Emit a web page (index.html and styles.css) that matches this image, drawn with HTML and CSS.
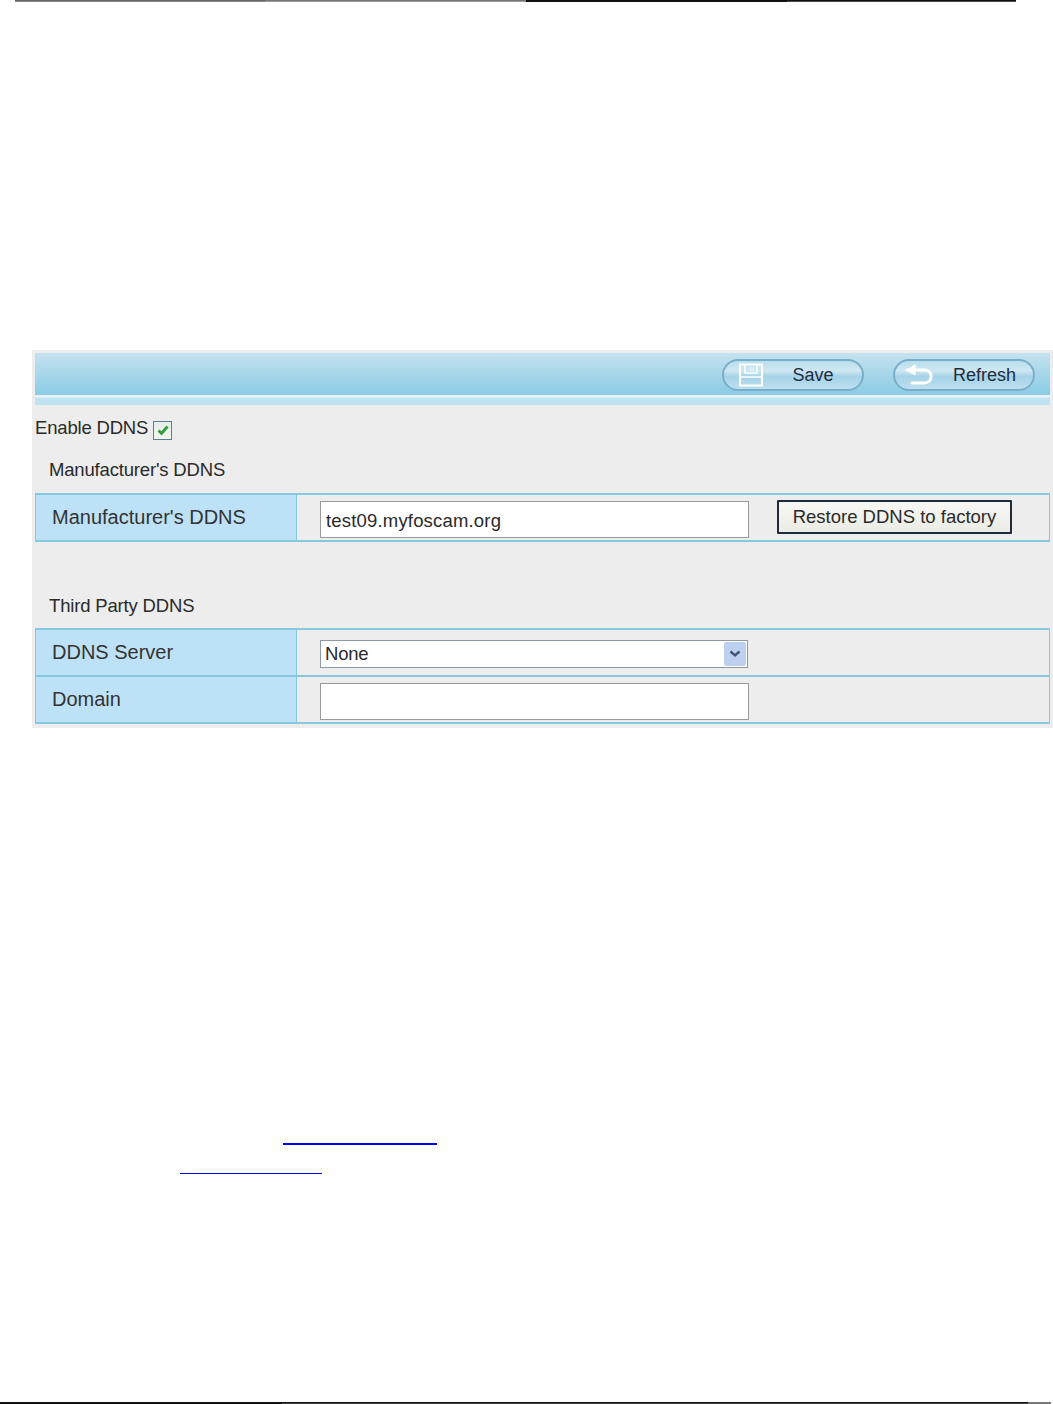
FILE: index.html
```html
<!DOCTYPE html>
<html lang="en">
<head>
<meta charset="utf-8">
<title>DDNS settings</title>
<link rel="stylesheet" href="styles.css">
</head>
<body>
<div class="page">
  <div class="rule rule-top"><i class="seg seg-a"></i><i class="seg seg-b"></i><i class="seg seg-c"></i><i class="seg seg-d"></i></div>
  <section class="panel">
    <div class="toolbar">
      <button class="pill" type="button">
        <svg class="pill-icon pill-icon-save" width="26" height="24" viewBox="0 0 26 24" aria-hidden="true"><path d="M2 1.500H24V22.500H2Z" fill="none" stroke="#fff" stroke-width="2"/><path d="M7 2V10H19V2" fill="none" stroke="#fff" stroke-width="1.500"/><path d="M12 4H16V8H12Z" fill="#e4f2f8" opacity=".7"/><path d="M3 14H23" stroke="#fff" stroke-width="1.500"/></svg>
        <span class="pill-text pill-text-save">Save</span>
      </button>
      <button class="pill" type="button">
        <svg class="pill-icon pill-icon-refresh" width="30" height="24" viewBox="0 0 30 24" aria-hidden="true"><path d="M3 7H20C29.500 7 29.500 20 20 20H8" fill="none" stroke="#fff" stroke-width="3" stroke-linecap="round"/><path d="M11 2.500L3 7L11 11.500Z" fill="#fff" stroke="#fff" stroke-width="1.500" stroke-linejoin="round"/></svg>
        <span class="pill-text pill-text-refresh">Refresh</span>
      </button>
    </div>
    <div class="band"></div>
    <label class="enable">Enable DDNS<span class="check"><svg width="14" height="14" viewBox="0 0 14 14" aria-hidden="true"><path d="M2.500 7.500L5.500 10.500L11.500 3.500" fill="none" stroke="#2f9e3a" stroke-width="2.800"/></svg></span></label>
    <h2 class="section-title first">Manufacturer's DDNS</h2>
    <div class="table">
      <div class="row row-first">
        <div class="label">Manufacturer's DDNS</div>
        <div class="cell">
          <input class="field field-low" type="text" value="test09.myfoscam.org">
          <button class="restore" type="button">Restore DDNS to factory</button>
        </div>
      </div>
    </div>
    <h2 class="section-title second">Third Party DDNS</h2>
    <div class="table">
      <div class="row row-first">
        <div class="label">DDNS Server</div>
        <div class="cell">
          <div class="select"><span>None</span><span class="arrow"><svg width="12" height="8" viewBox="0 0 12 8" aria-hidden="true"><path d="M1.500 1.500L6 5.500L10.500 1.500" fill="none" stroke="#3f5878" stroke-width="2.400"/></svg></span></div>
        </div>
      </div>
      <div class="row">
        <div class="label">Domain</div>
        <div class="cell"><input class="field field-domain" type="text" value=""></div>
      </div>
    </div>
  </section>
  <div class="links">
    <a class="link link-a" href="#" aria-label="link"></a>
    <a class="link link-b" href="#" aria-label="link"></a>
  </div>
  <div class="rule rule-bottom"><i class="seg seg-e"></i><i class="seg seg-f"></i><i class="seg seg-g"></i></div>
</div>
</body>
</html>
```
FILE: styles.css
```css
* { box-sizing: border-box; }
html, body { margin: 0; padding: 0; background: #fff; }
body { font-family: "Liberation Sans", Arial, sans-serif; color: #2a2a2a; }
.page { width: 1053px; height: 1404px; display: flex; flex-direction: column; overflow: hidden; }

.rule { display: flex; height: 2px; flex: none; }
.seg { display: block; height: 100%; }
.rule-top { margin-left: 15px; width: 1001px; }
.seg-a { width: 250px; background: linear-gradient(#555, #999); }
.seg-b { width: 261px; background: linear-gradient(#666, #aaa); }
.seg-c { width: 261px; background: #111; }
.seg-d { width: 229px; background: linear-gradient(#111 50%, #888); }
.rule-bottom { margin-top: auto; }
.seg-e { width: 282px; background: #111; }
.seg-f { width: 746px; background: linear-gradient(#111 50%, #777); }
.seg-g { width: 23px; background: #777; }

.panel { margin: 348px 0 0 32px; width: 1021px; height: 378px; background: #ededed; padding: 3px 3px 0 3px; flex: none; }
.toolbar { height: 42px; display: flex; justify-content: flex-end; align-items: flex-start; gap: 29px; padding: 6px 15px 0 0; background: linear-gradient(#c5e2ef, #aad8ea 45%, #8accE6); }
.band { height: 9px; margin-top: 1px; background: linear-gradient(#eaf5f9 0, #eaf5f9 1px, #bfe3f1 2px, #bfe3f1); }
.pill { width: 142px; height: 32px; padding: 0 0 0 14px; display: flex; align-items: center; border: 2.500px solid #79aeca; border-radius: 16px; background: linear-gradient(#b9deee, #cfe7f2 35%, #a6d3e8 55%, #bcdff0); font: inherit; color: #1f2d3d; }
.pill-icon { flex: none; }
.pill-icon-refresh { margin-left: -5px; }
.pill-text { flex: 1; font-size: 18px; text-align: center; }
.pill-text-refresh { padding-left: 2px; }

.enable { display: flex; align-items: center; height: 26px; margin-top: 10px; font-size: 18.500px; letter-spacing: -.18px; white-space: pre; }
.check { width: 19px; height: 19px; margin: 4px 0 0 5px; border: 1.500px solid #5b7f99; background: linear-gradient(#e4eee8, #f3f5f0); display: flex; align-items: center; justify-content: center; }
.section-title { margin: 0; padding-left: 14px; font-size: 18.500px; font-weight: 400; letter-spacing: -.17px; line-height: 24px; }
.section-title.first { height: 41px; padding-top: 17px; margin-bottom: 11px; }
.section-title.second { height: 86px; padding-top: 52px; }

.table { border-bottom: 2px solid #86c8dd; border-left: 1.500px solid #86c8dd; border-right: 1.500px solid #86c8dd; }
.row { display: grid; grid-template-columns: 261px 1fr; border-top: 2px solid #86c8dd; height: 47px; }
.label { background: #bde2f7; border-right: 1.500px solid #86c8dd; display: flex; align-items: center; padding: 0 0 0 16px; font-size: 20px; color: #333; }
.cell { display: flex; align-items: center; padding-left: 23px; }

.field { width: 429px; height: 37px; border: 1.500px solid #9a9a9a; background: #fff; padding: 2px 5px 0; font: 18.500px "Liberation Sans", Arial, sans-serif; letter-spacing: .18px; color: #2a2a2a; border-radius: 0; }
.field-low { margin-top: 4px; }
.field-domain { margin-top: 3px; }
.restore { width: 235px; height: 34px; margin: 0 0 1px 28px; padding: 0; border: 2px solid #1d2b3c; border-radius: 1px; background: linear-gradient(#f7f7f5, #ecece6); font: 18.500px "Liberation Sans", Arial, sans-serif; color: #2a2a2a; }
.select { width: 428px; height: 28px; margin-top: 2px; border: 1.500px solid #8d99a6; background: #fff; display: flex; align-items: center; justify-content: space-between; padding: 0 1px 0 4px; font-size: 18.500px; letter-spacing: -.2px; }
.arrow { width: 22px; height: 24px; background: #bdd0f2; border-radius: 2px; display: flex; align-items: center; justify-content: center; }

.links { display: flex; flex-direction: column; margin-top: 415px; }
.link { display: block; flex: none; }
.link-a { width: 154px; height: 2px; margin-left: 283px; background: #0000f0; }
.link-b { width: 142px; height: 1px; margin: 28px 0 0 180px; background: #0000f0; }
```
